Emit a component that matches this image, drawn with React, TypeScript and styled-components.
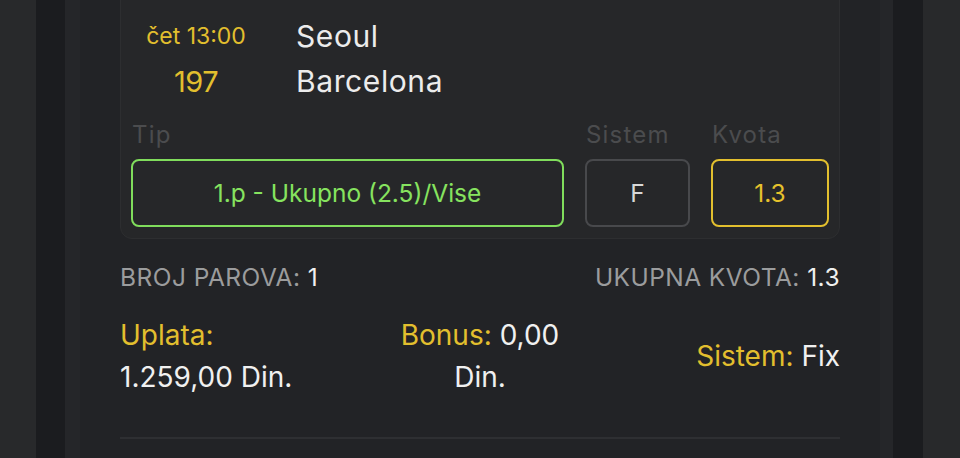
import React from "react";
import styled, { createGlobalStyle } from "styled-components";

const Global = createGlobalStyle`
  html, body { margin: 0; padding: 0; background: #222326; }
  body { font-family: "Inter", "Noto Sans", sans-serif; overflow: hidden; }
  * { box-sizing: border-box; }
`;

const Page = styled.div`
  display: flex;
  width: 960px;
  height: 458px;
  overflow: hidden;
`;

const Stripe = styled.div<{ $w: number; $bg: string }>`
  flex: 0 0 ${(p) => p.$w}px;
  background: ${(p) => p.$bg};
`;

const Panel = styled.div`
  flex: 1 1 auto;
  background: #222326;
  padding: 0 40px;
  display: flex;
  flex-direction: column;
`;

const Card = styled.div`
  margin-top: -12px;
  background: #262729;
  border: 1px solid #2d2e30;
  border-radius: 12px;
  padding: 25px 10px 11px;
`;

const Match = styled.div`
  display: flex;
  align-items: flex-start;
`;

const TimeCol = styled.div`
  width: 130px;
  display: flex;
  flex-direction: column;
  align-items: center;
`;

const Time = styled.div`
  color: #e2bf2e;
  font-size: 23px;
  line-height: 45px;
`;

const Code = styled.div`
  color: #e2bf2e;
  font-size: 29px;
  line-height: 45px;
  letter-spacing: -0.5px;
`;

const Teams = styled.div`
  margin-left: 35px;
  display: flex;
  flex-direction: column;
`;

const Team = styled.div`
  color: #ececec;
  font-size: 30px;
  line-height: 45px;
  letter-spacing: 0.6px;
`;

const BetGrid = styled.div`
  margin-top: 16px;
  display: grid;
  grid-template-columns: 1fr 105px 118px;
  column-gap: 21px;
  row-gap: 9px;
`;

const Label = styled.div`
  color: #4b4c4e;
  font-size: 24px;
  line-height: 30px;
  letter-spacing: 1.2px;
  padding-left: 1px;
`;

const Box = styled.div<{ $border: string; $color: string }>`
  height: 68px;
  border: 2px solid ${(p) => p.$border};
  border-radius: 8px;
  display: flex;
  align-items: center;
  justify-content: center;
  color: ${(p) => p.$color};
  font-size: 24.5px;
`;

const Summary = styled.div`
  display: flex;
  justify-content: space-between;
  margin-top: 23px;
  font-size: 24.5px;
  line-height: 30px;
  letter-spacing: 0.45px;
  text-transform: uppercase;
`;

const Muted = styled.span`
  color: #9b9c9d;
`;

const Bright = styled.span`
  color: #f0f0f0;
`;

const Gold = styled.span`
  color: #e2bf2e;
`;

const Totals = styled.div`
  display: grid;
  grid-template-columns: 1fr 1fr 1fr;
  align-items: center;
  margin-top: 22px;
  font-size: 28px;
  line-height: 42px;
`;

const Cell = styled.div<{ $align: string }>`
  text-align: ${(p) => p.$align};
  color: #f0f0f0;
`;

const CenterCell = styled.div`
  display: flex;
  flex-direction: column;
  align-items: center;
  color: #f0f0f0;
  justify-self: center;
`;

const Divider = styled.div`
  margin-top: 39px;
  height: 2px;
  background: #2e2f32;
`;

export default function App() {
  return (
    <>
      <Global />
      <Page>
        <Stripe $w={36} $bg="#28292b" />
        <Stripe $w={29} $bg="#1b1c1f" />
        <Stripe $w={15} $bg="#252629" />
        <Panel>
          <Card>
            <Match>
              <TimeCol>
                <Time>čet 13:00</Time>
                <Code>197</Code>
              </TimeCol>
              <Teams>
                <Team>Seoul</Team>
                <Team>Barcelona</Team>
              </Teams>
            </Match>
            <BetGrid>
              <Label>Tip</Label>
              <Label>Sistem</Label>
              <Label>Kvota</Label>
              <Box $border="#80dd5c" $color="#86e35f">1.p - Ukupno (2.5)/Vise</Box>
              <Box $border="#48494c" $color="#d8d8d8">F</Box>
              <Box $border="#e2bf2e" $color="#e6c22c">1.3</Box>
            </BetGrid>
          </Card>
          <Summary>
            <span>
              <Muted>Broj parova: </Muted>
              <Bright>1</Bright>
            </span>
            <span>
              <Muted>Ukupna kvota: </Muted>
              <Bright>1.3</Bright>
            </span>
          </Summary>
          <Totals>
            <Cell $align="left">
              <Gold>Uplata:</Gold>
              <br />
              1.259,00 Din.
            </Cell>
            <CenterCell>
              <div>
                <Gold>Bonus:</Gold> 0,00
              </div>
              <div>Din.</div>
            </CenterCell>
            <Cell $align="right">
              <Gold>Sistem:</Gold> Fix
            </Cell>
          </Totals>
          <Divider />
        </Panel>
        <Stripe $w={13} $bg="#252629" />
        <Stripe $w={30} $bg="#1b1c1f" />
        <Stripe $w={37} $bg="#28292b" />
      </Page>
    </>
  );
}
